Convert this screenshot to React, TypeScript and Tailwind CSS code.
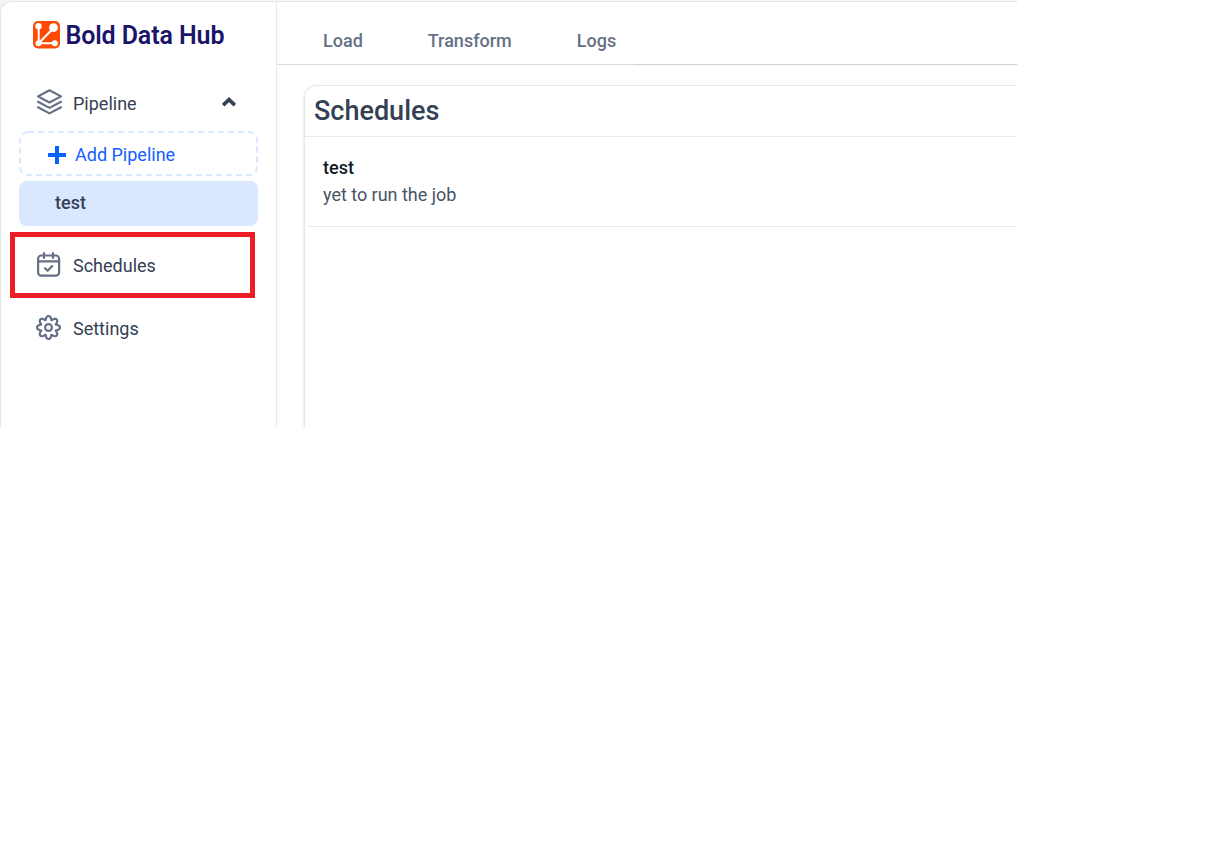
import type { ReactNode } from "react";

function LogoIcon() {
  return (
    <svg className="h-7 w-[27px] shrink-0" viewBox="0 0 27 28" fill="none">
      <rect width="27" height="27.5" rx="5" fill="#ff4a03" />
      <path d="M5.7 5.5V22.2L20.5 7M5.7 22.2H21.5" stroke="#fff" strokeWidth="2" />
      <circle cx="5.5" cy="5.3" r="3.2" fill="#fff" />
      <circle cx="20.5" cy="6.6" r="4.4" fill="#fff" />
      <circle cx="5.5" cy="22.2" r="3" fill="#fff" />
      <circle cx="21.8" cy="22.2" r="3" fill="#fff" />
    </svg>
  );
}

function LayersIcon() {
  return (
    <svg className="-mt-0.5 h-[26px] w-[26px]" viewBox="0 0 26 26" fill="none" stroke="#667085" strokeWidth="2.2" strokeLinecap="round" strokeLinejoin="round">
      <path d="M12.5 1.3 24 7.4 12.5 13.5 1 7.4Z" />
      <path d="M1 12.8 12.5 18.9 24 12.8" />
      <path d="M1 18.3 12.5 24.4 24 18.3" />
    </svg>
  );
}

function CalendarIcon() {
  return (
    <svg className="h-[26px] w-[26px]" viewBox="0 0 26 26" fill="none" stroke="#667085" strokeWidth="2.2" strokeLinecap="round" strokeLinejoin="round">
      <rect x="1.1" y="3.5" width="21" height="20.2" rx="3.2" />
      <path d="M1 9.3H22M7 1.1V6M16 1.1V6M8 16.3 10.6 18.8 15.2 14.1" />
    </svg>
  );
}

// Eight rounded teeth: the radius swings between 7.9 and 11.5 around the centre.
const gearPoints = Array.from({ length: 128 }, (_, i) => {
  const angle = (i / 128) * Math.PI * 2;
  const radius = 9.7 + 1.8 * Math.cos(8 * angle);
  const bend = angle + 0.05 * Math.sin(8 * angle);
  return `${(12.5 + radius * Math.sin(bend)).toFixed(2)},${(12.5 - radius * Math.cos(bend)).toFixed(2)}`;
}).join(" ");

function GearIcon() {
  return (
    <svg className="-mt-px -ml-px h-[25px] w-[25px]" viewBox="0 0 25 25" fill="none" stroke="#667085" strokeWidth="2.2" strokeLinejoin="round">
      <polygon points={gearPoints} />
      <circle cx="12.5" cy="12.5" r="3.4" />
    </svg>
  );
}

function NavItem({ icon, label }: { icon: ReactNode; label: string }) {
  return (
    <div className="flex h-7 items-center pl-[18px] text-[#344054]">
      <span className="flex w-9 shrink-0">{icon}</span>
      <span className="pt-0.5">{label}</span>
    </div>
  );
}

export default function App() {
  return (
    <div className="min-h-screen bg-white font-['Roboto',sans-serif] text-[18px] leading-7">
      <div className="h-[427px] w-[1017px] overflow-hidden bg-[#f5f5f5] pt-px">
        <div className="flex h-[426px] rounded-tl-[12px] border-t border-l border-[#e6e6e8] bg-white">
          <aside className="w-[276px] shrink-0 border-r border-[#e7e8ee] pl-[18px]">
            <div className="flex h-[66px] items-center gap-[5.4px] pl-[14px]">
              <LogoIcon />
              <span className="pt-0.5 text-[25px] leading-8 font-semibold tracking-[-0.1px] text-[#1a146b]">Bold Data Hub</span>
            </div>
            <div className="relative mt-[21px]">
              <NavItem icon={<LayersIcon />} label="Pipeline" />
              <svg className="absolute top-2 left-[203px] h-[10px] w-[14px]" viewBox="0 0 14 10" fill="none">
                <path d="M1.2 8.2 7 2.6 12.8 8.2" stroke="#344054" strokeWidth="3.6" />
              </svg>
            </div>
            <div className="mt-[14px] flex h-[45px] w-[239px] items-center pt-0.5">
              <svg className="absolute -mt-0.5 h-[45px] w-[239px]" viewBox="0 0 239 45" fill="none">
                <rect x="1" y="1" width="237" height="43" rx="8" stroke="#dae8ff" strokeWidth="2" strokeDasharray="6 4" />
              </svg>
              <svg className="ml-[29px] h-[18px] w-[18px]" viewBox="0 0 18 18">
                <path d="M9 0V18M0 9H18" stroke="#0561ff" strokeWidth="4" />
              </svg>
              <span className="ml-[9px] text-[#155eff]">Add Pipeline</span>
            </div>
            <div className="mt-[5px] flex h-[45px] w-[239px] items-center rounded-lg bg-[#dae8ff] pb-0.5 pl-9 font-medium text-[#344054]">test</div>
            <div className="mt-[6px] -ml-[9px] flex h-[66px] w-[245px] items-center border-[5px] border-[#ee1c25] pl-1">
              <NavItem icon={<CalendarIcon />} label="Schedules" />
            </div>
            <div className="mt-4">
              <NavItem icon={<GearIcon />} label="Settings" />
            </div>
          </aside>
          <main className="flex min-w-0 flex-1 flex-col">
            <nav className="flex h-[62px] shrink-0 gap-[65px] pt-[25px] pl-[46px] font-medium text-[#667085]">
              <span>Load</span>
              <span>Transform</span>
              <span>Logs</span>
            </nav>
            <div className="flex h-px shrink-0 bg-[#d0d0d2]">
              <div className="w-[358px] bg-[#d9dce3]" />
            </div>
            <section className="mt-5 ml-[27px] flex-1 rounded-tl-[13px] border-t border-l border-[#e7e8ed] shadow-[-1px_0_2px_rgba(16,24,40,0.07)]">
              <h1 className="h-[51px] border-b border-[#eaebee] pt-[9px] pl-[9px] text-[27px] leading-8 font-medium text-[#344054]">Schedules</h1>
              <div className="ml-0.5 h-[90px] rounded-bl border-b border-[#eaebee] pt-[17px] pl-4 leading-[27px]">
                <p className="font-medium text-[#101828]">test</p>
                <p className="tracking-[-0.02px] text-[#475467]">yet to run the job</p>
              </div>
            </section>
          </main>
        </div>
      </div>
    </div>
  );
}
